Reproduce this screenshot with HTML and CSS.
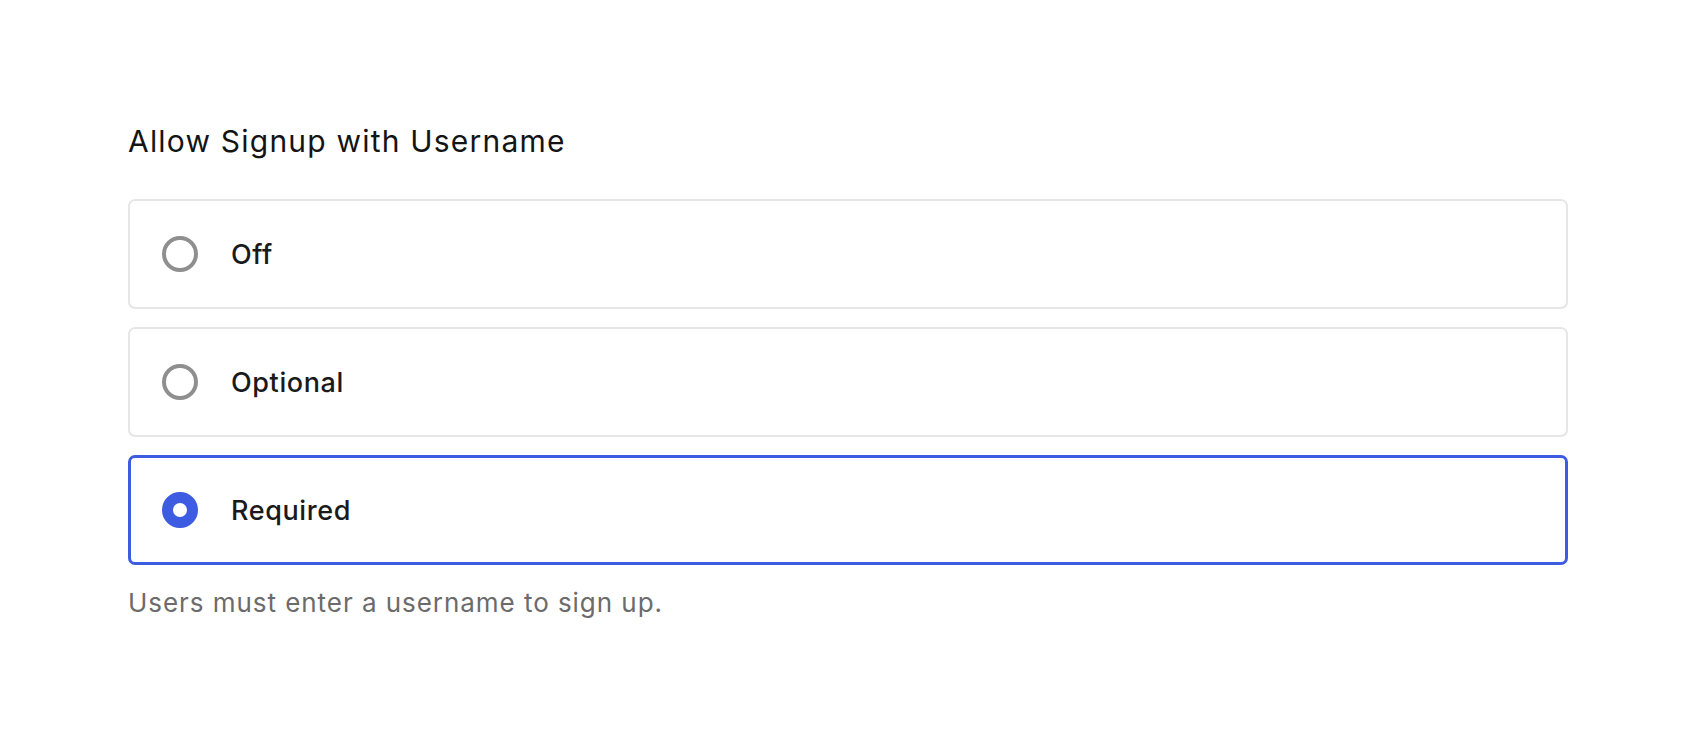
FILE: index.html
```html
<!DOCTYPE html>
<html>
<head>
    <title>Signup Settings</title>
    <link rel="stylesheet" href="styles.css">
</head>
<body>
    <div class="page">
        <h2 class="title">Allow Signup with Username</h2>
        <div class="options">
            <label class="option">
                <span class="radio"></span>
                <span class="option-label">Off</span>
            </label>
            <label class="option">
                <span class="radio"></span>
                <span class="option-label">Optional</span>
            </label>
            <label class="option selected">
                <span class="radio checked"></span>
                <span class="option-label">Required</span>
            </label>
        </div>
        <p class="help">Users must enter a username to sign up.</p>
    </div>
</body>
</html>
```

FILE: styles.css
```css
body {
    margin: 0;
    background: #ffffff;
    font-family: Inter, "Noto Sans", sans-serif;
    color: #1a1a1a;
}
.page {
    padding: 123px 128px;
}
.title {
    margin: 0 0 40px 0;
    font-size: 30px;
    line-height: 36px;
    font-weight: 400;
    letter-spacing: 1.2px;
    color: #141414;
}
.options {
    display: flex;
    flex-direction: column;
    gap: 18px;
}
.option {
    box-sizing: border-box;
    height: 110px;
    display: flex;
    align-items: center;
    gap: 33px;
    padding-left: 32px;
    border: 2px solid #e6e6e6;
    border-radius: 7px;
    cursor: pointer;
}
.option.selected {
    border: 3px solid #3d5ce1;
    padding-left: 31px;
}
.radio {
    box-sizing: border-box;
    width: 36px;
    height: 36px;
    border-radius: 50%;
    border: 4px solid #8f8f8f;
    flex-shrink: 0;
}
.radio.checked {
    border: 11px solid #3d5ce1;
    background: #ffffff;
}
.option-label {
    font-size: 27px;
    font-weight: 500;
    letter-spacing: 0.6px;
    color: #1a1a1a;
}
.help {
    margin: 22px 0 0 0;
    font-size: 26px;
    line-height: 32px;
    letter-spacing: 0.95px;
    color: #6b6b6b;
}
```
